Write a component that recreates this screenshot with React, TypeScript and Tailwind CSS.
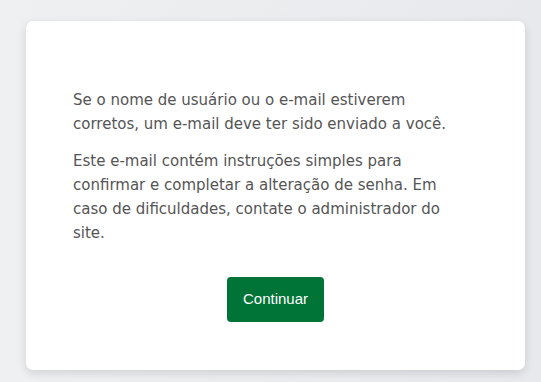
import React from 'react';

const App: React.FC = () => {
  return (
    <div className="min-h-screen w-full bg-gradient-to-r from-[#eef0f2] to-[#e7e9ec] pt-[21px] pl-[26px] pr-[16px] pb-[12px]">
      <div
        className="w-[499px] h-[349px] bg-white rounded-[7px] shadow-[0_3px_10px_rgba(0,0,0,0.13)] pt-[67px] px-[47px] flex flex-col"
        style={{ fontFamily: '"DejaVu Sans", sans-serif' }}
      >
        {/* Message */}
        <div className="text-[15px] leading-[24px] text-[#555555] whitespace-nowrap">
          <p>
            Se o nome de usuário ou o e-mail estiverem
            <br />
            corretos, um e-mail deve ter sido enviado a você.
          </p>
          <p className="mt-[13px]">
            Este e-mail contém instruções simples para
            <br />
            confirmar e completar a alteração de senha. Em
            <br />
            caso de dificuldades, contate o administrador do
            <br />
            site.
          </p>
        </div>

        <div className="flex justify-center mt-[32px]">
          <button
            type="button"
            className="w-[97px] h-[45px] rounded-[4px] bg-[#007336] text-white text-[15px]"
            style={{ fontFamily: '"Liberation Sans", Arial, sans-serif' }}
          >
            Continuar
          </button>
        </div>
      </div>
    </div>
  );
};

export default App;
